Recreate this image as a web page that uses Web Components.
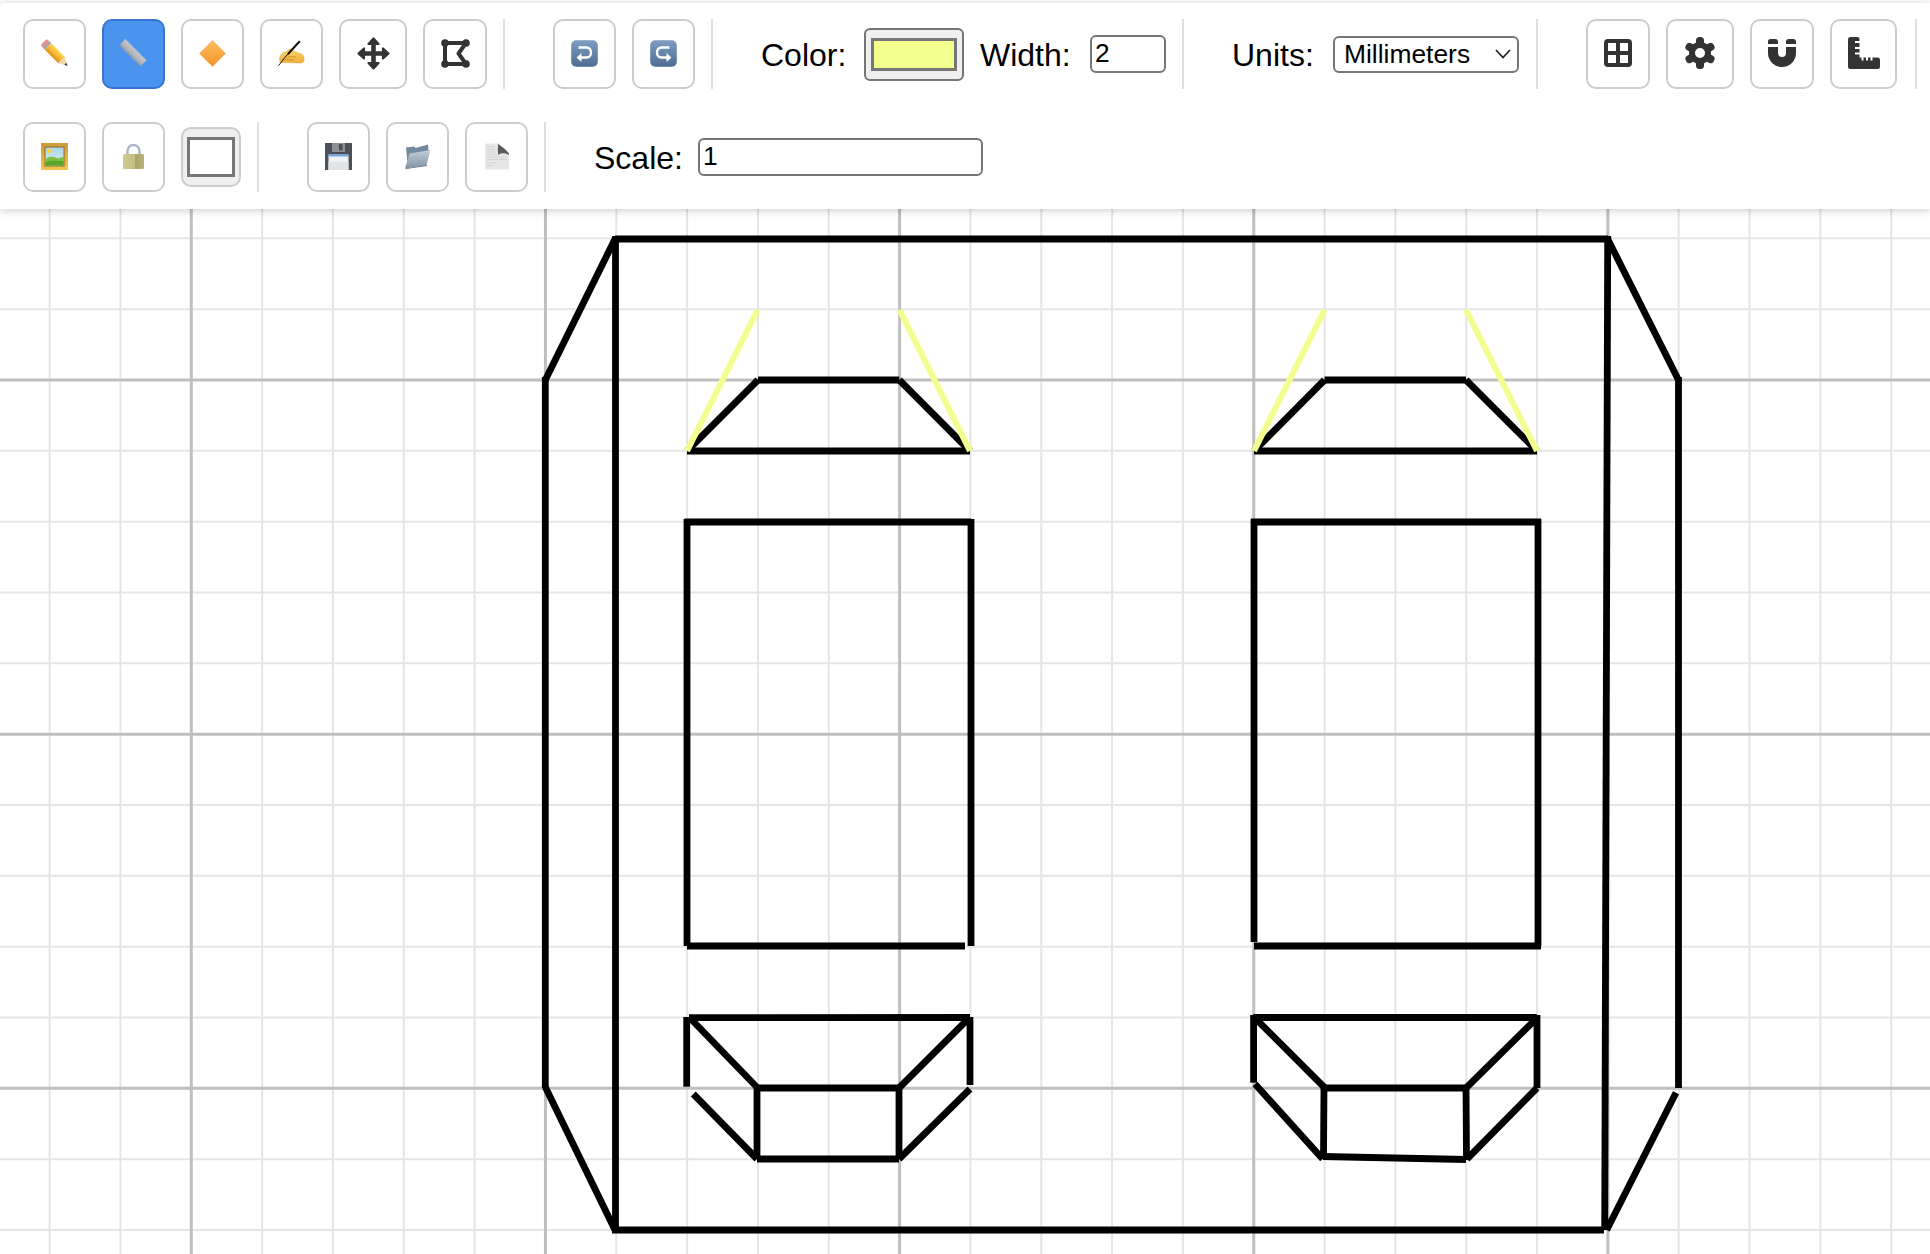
<!DOCTYPE html>
<html lang="en">
<head>
<meta charset="utf-8">
<title>Drawing tool</title>
<style>
  html, body { margin: 0; height: 100%; background: #fff; overflow: hidden; }
  body { font-family: "Liberation Sans", Arial, sans-serif; color: #000; }
</style>
</head>
<body>
<app-shell>
  <tool-bar slot="bar">
    <tool-row>
      <tool-btn><tool-icon name="pencil"></tool-icon></tool-btn>
      <tool-btn active><tool-icon name="ruler"></tool-icon></tool-btn>
      <tool-btn><tool-icon name="diamond"></tool-icon></tool-btn>
      <tool-btn><tool-icon name="hand"></tool-icon></tool-btn>
      <tool-btn w="68"><tool-icon name="move"></tool-icon></tool-btn>
      <tool-btn w="64"><tool-icon name="poly"></tool-icon></tool-btn>
      <tool-sep></tool-sep>
      <tool-btn><tool-icon name="undo"></tool-icon></tool-btn>
      <tool-btn><tool-icon name="redo"></tool-icon></tool-btn>
      <tool-sep></tool-sep>
      <field-label w="87">Color:</field-label>
      <color-field color="#f2ff8e"></color-field>
      <field-label w="94">Width:</field-label>
      <text-field w="76">2</text-field>
      <tool-sep></tool-sep>
      <field-label w="85">Units:</field-label>
      <select-field>Millimeters</select-field>
      <tool-sep style="margin-left:1px"></tool-sep>
      <tool-btn w="64"><tool-icon name="grid"></tool-icon></tool-btn>
      <tool-btn w="68"><tool-icon name="gear"></tool-icon></tool-btn>
      <tool-btn w="64"><tool-icon name="magnet"></tool-icon></tool-btn>
      <tool-btn w="67"><tool-icon name="measure"></tool-icon></tool-btn>
      <tool-sep style="margin-left:2px"></tool-sep>
    </tool-row>
    <tool-row>
      <tool-btn><tool-icon name="picture"></tool-icon></tool-btn>
      <tool-btn><tool-icon name="lock"></tool-icon></tool-btn>
      <fill-field></fill-field>
      <tool-sep></tool-sep>
      <tool-btn><tool-icon name="floppy"></tool-icon></tool-btn>
      <tool-btn><tool-icon name="folder"></tool-icon></tool-btn>
      <tool-btn><tool-icon name="page"></tool-icon></tool-btn>
      <tool-sep></tool-sep>
      <field-label w="88">Scale:</field-label>
      <text-field w="285">1</text-field>
    </tool-row>
  </tool-bar>
  <draw-canvas slot="canvas"></draw-canvas>
</app-shell>

<script>
const ICONS = {
  pencil: [27, `<svg viewBox="0 0 27 27"><defs><linearGradient id="b" x1="0" y1="0" x2="0" y2="1"><stop offset="0" stop-color="#fbd65e"/><stop offset=".55" stop-color="#f5b731"/><stop offset="1" stop-color="#dd8d1a"/></linearGradient></defs>
    <g transform="translate(3.6 3) rotate(45)"><rect x="-1.5" y="-4.6" width="5" height="9.2" rx="2.4" fill="#e88f93"/><rect x="2" y="-4.6" width="3" height="9.2" fill="#a9a9a9"/><rect x="5" y="-4.6" width="19" height="9.2" fill="url(#b)"/><path d="M24 -4.6L24 4.6L32 0Z" fill="#f1d7ab"/><path d="M29.4 -1.3L29.4 1.3L32.4 0Z" fill="#1e2630"/></g></svg>`],
  ruler: [27, `<svg viewBox="0 0 27 27"><defs><linearGradient id="r" x1="0" y1="0" x2="0" y2="1"><stop offset="0" stop-color="#c4c7cc"/><stop offset=".6" stop-color="#b1b5bb"/><stop offset="1" stop-color="#8e97a6"/></linearGradient></defs>
    <g transform="translate(3.6 3.6) rotate(45)"><rect x="-2" y="-4.4" width="30" height="8.8" fill="url(#r)"/></g></svg>`],
  diamond: [27, `<svg viewBox="0 0 27 27"><defs><linearGradient id="d" x1="0" y1="0" x2="0" y2="1"><stop offset="0" stop-color="#fbbf5c"/><stop offset="1" stop-color="#f5922a"/></linearGradient></defs>
    <path d="M13.5 .5L26.5 13.5L13.5 26.5L.5 13.5Z" fill="url(#d)" stroke="#eaa659" stroke-width=".6"/></svg>`],
  hand: [27, `<svg viewBox="0 0 27 27"><defs><linearGradient id="h" x1="0" y1="0" x2="0" y2="1"><stop offset="0" stop-color="#fcd866"/><stop offset="1" stop-color="#f0ae3a"/></linearGradient></defs>
    <path d="M1.500 19C2 15 5 12 8.500 11.500L11 9L14.500 9L16.500 11.500L22 13.500C25.500 14.500 26.500 17 26 20.500C25.500 22.500 24 23 22 23L6 22.500L2 22.500Z" fill="url(#h)" stroke="#d0963a" stroke-width=".4"/>
    <path d="M4 20C8 19 12 20 16 20M9 17.500C12 16 15 16.500 18 17" fill="none" stroke="#b87a24" stroke-width=".6"/>
    <path d="M21 .6L22.600 1.800L11 14.500L9 15.500L9.500 13Z" fill="#111"/><path d="M9 14.800L.4 25.800" stroke="#111" stroke-width=".9"/></svg>`],
  move: [33, `<svg viewBox="0 0 33 33"><g fill="#333" stroke="#333" stroke-width="2.200" stroke-linejoin="round"><path d="M16.500 1.500L21.500 7H11.500Z"/><path d="M16.500 31.500L21.500 26H11.500Z"/><path d="M1.500 16.500L7 11.500V21.500Z"/><path d="M31.500 16.500L26 11.500V21.500Z"/></g><path d="M16.500 6V27M6 16.500H27" stroke="#333" stroke-width="4.600"/></svg>`],
  poly: [29, `<svg viewBox="0 0 29 29"><path d="M4 4H25L17.500 14.500L25 25H4Z" fill="none" stroke="#333" stroke-width="4" stroke-linejoin="round"/><g fill="#333"><circle cx="4" cy="4" r="3.800"/><circle cx="25" cy="4" r="3.800"/><circle cx="4" cy="25" r="3.800"/><circle cx="25" cy="25" r="3.800"/></g></svg>`],
  undo: [27, `<svg viewBox="0 0 27 27"><defs><linearGradient id="u" x1="0" y1="0" x2="0" y2="1"><stop offset="0" stop-color="#7f9dc0"/><stop offset="1" stop-color="#4d6c90"/></linearGradient></defs><rect x=".2" y=".2" width="26.600" height="26.600" rx="5" fill="url(#u)"/>
    <path d="M7.500 7.500H15.500C21.500 7.500 21.500 17.500 15.500 17.500H9" fill="none" stroke="#fff" stroke-width="2.400"/><path d="M10.500 13L5.500 17.500L10.500 22Z" fill="#fff"/></svg>`],
  redo: [27, `<svg viewBox="0 0 27 27"><defs><linearGradient id="u" x1="0" y1="0" x2="0" y2="1"><stop offset="0" stop-color="#7f9dc0"/><stop offset="1" stop-color="#4d6c90"/></linearGradient></defs><rect x=".2" y=".2" width="26.600" height="26.600" rx="5" fill="url(#u)"/>
    <path d="M19.500 7.500H11.500C5.500 7.500 5.500 17.500 11.500 17.500H18" fill="none" stroke="#fff" stroke-width="2.400"/><path d="M16.500 13L21.500 17.500L16.500 22Z" fill="#fff"/></svg>`],
  grid: [28, `<svg viewBox="0 0 28 28"><path fill="#333" fill-rule="evenodd" d="M4 0H24A4 4 0 0 1 28 4V24A4 4 0 0 1 24 28H4A4 4 0 0 1 0 24V4A4 4 0 0 1 4 0ZM4 4V12H12V4ZM16 4V12H24V4ZM4 16V24H12V16ZM16 16V24H24V16Z"/></svg>`],
  gear: [32, `<svg viewBox="0 0 32 32"><g fill="#333"><circle cx="16" cy="16" r="11"/><rect x="12" y="0" width="8" height="9" rx="3.500"/><rect x="12" y="0" width="8" height="9" rx="3.500" transform="rotate(60 16 16)"/><rect x="12" y="0" width="8" height="9" rx="3.500" transform="rotate(120 16 16)"/><rect x="12" y="0" width="8" height="9" rx="3.500" transform="rotate(180 16 16)"/><rect x="12" y="0" width="8" height="9" rx="3.500" transform="rotate(240 16 16)"/><rect x="12" y="0" width="8" height="9" rx="3.500" transform="rotate(300 16 16)"/></g><circle cx="16" cy="16" r="5" fill="#fff"/></svg>`],
  magnet: [28, `<svg viewBox="0 0 28 28"><path d="M5 8V14A9 9 0 0 0 23 14V8" fill="none" stroke="#333" stroke-width="10"/><g fill="#333"><path d="M0 2.800A2.800 2.800 0 0 1 2.800 0H7.200A2.800 2.800 0 0 1 10 2.800V5H0Z"/><path d="M18 2.800A2.800 2.800 0 0 1 20.800 0H25.200A2.800 2.800 0 0 1 28 2.800V5H18Z"/></g></svg>`],
  measure: [32, `<svg viewBox="0 0 32 32"><path fill="#333" d="M2.500 0H9A2.500 2.500 0 0 1 11.500 2.500V4H7V6H11.500V10H7V12H11.500V15.500H7V17.500H11.500V20.500H13.500V23.500H15.500V20.500H18V23.500H20V20.500H22.500V23.500H24.500V20.500H29.500A2.500 2.500 0 0 1 32 23V29.500A2.500 2.500 0 0 1 29.500 32H2.500A2.500 2.500 0 0 1 0 29.500V2.500A2.500 2.500 0 0 1 2.500 0Z"/></svg>`],
  picture: [27, `<svg viewBox="0 0 27 27"><defs><linearGradient id="f" x1="0" y1="0" x2="0" y2="1"><stop offset="0" stop-color="#cd9a38"/><stop offset="1" stop-color="#f0c84e"/></linearGradient><linearGradient id="s" x1="0" y1="0" x2="0" y2="1"><stop offset="0" stop-color="#a9d4e9"/><stop offset="1" stop-color="#dfeef2"/></linearGradient></defs>
    <rect width="27" height="27" fill="url(#f)"/><rect x="3.500" y="3.500" width="20" height="20" fill="#8a6a2a"/><rect x="4.500" y="4.500" width="18" height="18" fill="url(#s)"/><circle cx="8" cy="8" r="2.300" fill="#f4d63c"/><path d="M4.500 16C9 12.500 13 14 17 15.500C19 14.500 21 14 22.500 14.500V22.500H4.500Z" fill="#7cc03f"/><path d="M4.500 19C10 17 16 18 22.500 18V22.500H4.500Z" fill="#57a52c"/></svg>`],
  lock: [27, `<svg viewBox="0 0 27 27"><defs><linearGradient id="l" x1="0" y1="0" x2="1" y2="0"><stop offset="0" stop-color="#cfcb93"/><stop offset=".55" stop-color="#c4bf83"/><stop offset=".6" stop-color="#a8a368"/><stop offset="1" stop-color="#bab57c"/></linearGradient></defs>
    <path d="M7.500 12.500V8A6 6 0 0 1 19.500 8V12.500" fill="none" stroke="#a9b5c8" stroke-width="2.400"/><rect x="3" y="11" width="21" height="15" rx="1.200" fill="url(#l)"/></svg>`],
  floppy: [27, `<svg viewBox="0 0 27 27"><path d="M.5 0H26.500A.5 .5 0 0 1 27 .5V26.500A.5 .5 0 0 1 26.500 27H.5A.5 .5 0 0 1 0 26.500V.5A.5 .5 0 0 1 .5 0Z" fill="#4b4f57"/><rect x="7" y="0" width="13" height="9" fill="#8d8f94"/><rect x="14" y="1" width="3.500" height="6.500" fill="#4b4f57"/><rect x="3.500" y="11.500" width="20" height="15.500" fill="#f1f2f4"/><rect x="3.500" y="11.500" width="20" height="2" fill="#6fa7e6"/><rect x="3.500" y="19" width="20" height="8" fill="#e2e3e6"/></svg>`],
  folder: [27, `<svg viewBox="0 0 27 27"><defs><linearGradient id="o" x1="0" y1="0" x2="0" y2="1"><stop offset="0" stop-color="#c3ced9"/><stop offset="1" stop-color="#7f93a5"/></linearGradient></defs>
    <path d="M2 4.500L10 3.500L11.500 5L24 1.500L25 12L4 25Z" fill="#7488a0"/><path d="M5.500 10.500L26.500 7L22.500 22L1 25.500Z" fill="url(#o)"/><path d="M1 25.500L22.500 22L23 23L2 26Z" fill="#5f7081"/></svg>`],
  page: [27, `<svg viewBox="0 0 27 27"><path d="M2 .5H15C17 4 20 9 26 10V26.500H2Z" fill="#e7e7e7"/><path d="M15 .5C16.500 2 24 7 26 10.500L26 12C22 9.500 17 10 15.500 12C14 8 15.500 3 15 .5Z" fill="#5b5b5b"/><g stroke="#cfcfcf" stroke-width=".8"><path d="M4 4H12M4 6.500H12M4 9H12M4 11.500H14M4 14H24M4 16.500H24M4 20H14M4 22.500H10"/></g></svg>`]
};

function def(name, html, setup) {
  customElements.define(name, class extends HTMLElement {
    connectedCallback() {
      if (this.shadowRoot) return;
      const root = this.attachShadow({ mode: 'open' });
      root.innerHTML = typeof html === 'function' ? html(this) : html;
      if (setup) setup(this, root);
    }
  });
}

def('app-shell', `<style>
  :host { display: flex; flex-direction: column; height: 100vh; padding-top: 3px; box-sizing: border-box; }
  ::slotted([slot=bar]) { flex: none; position: relative; z-index: 1; }
  ::slotted([slot=canvas]) { flex: 1; min-height: 0; }
</style><slot name="bar"></slot><slot name="canvas"></slot>`);

def('tool-bar', `<style>
  :host { display: flex; flex-direction: column; gap: 33px; padding: 16px 0 17px 23px; background: #fff;
          box-shadow: 0 1px 9px rgba(0,0,0,.22); border-top-left-radius: 4px; }
</style><slot></slot>`);

def('tool-row', `<style>
  :host { display: flex; align-items: center; height: 70px; gap: 16px; }
</style><slot></slot>`);

def('tool-sep', `<style>
  :host { display: block; width: 2px; height: 70px; background: #e0e0e0; margin-right: 32px; flex: none; }
</style>`);

def('tool-btn', el => `<style>
  :host { display: flex; align-items: center; justify-content: center; box-sizing: border-box; flex: none;
          width: ${el.getAttribute('w') || 63}px; height: 70px; padding-bottom: 2px;
          background: #fff; border: 2px solid #cdcdcd; border-radius: 10px; }
  :host([active]) { background: #4a94ee; border-color: #3a74d2; }
</style><slot></slot>`);

def('tool-icon', el => {
  const [w, svg] = ICONS[el.getAttribute('name')];
  return `<style>:host { display: block; width: ${w}px; height: ${w}px; line-height: 0; } svg { width: 100%; height: 100%; display: block; overflow: visible; }</style>${svg}`;
});

def('field-label', el => `<style>
  :host { display: block; flex: none; width: ${el.getAttribute('w')}px; padding-top: 2px;
          font: 32px/36px "Liberation Sans", Arial, sans-serif; color: #000; white-space: nowrap; }
</style><slot></slot>`);

def('text-field', el => `<style>
  :host { display: block; box-sizing: border-box; flex: none; width: ${el.getAttribute('w')}px; height: 38px;
          border: 2px solid #767676; border-radius: 6px; background: #fff; padding-left: 3px;
          font: 26.3px/32px "Liberation Sans", Arial, sans-serif; color: #000; }
</style><slot></slot>`);

def('color-field', el => `<style>
  :host { display: flex; box-sizing: border-box; flex: none; width: 100px; height: 53px; padding: 8px 5px;
          background: #efefef; border: 2px solid #767676; border-radius: 6px; }
  i { display: block; flex: 1; background: ${el.getAttribute('color')}; border: 3px solid #777; }
</style><i></i>`);

def('fill-field', `<style>
  :host { display: flex; box-sizing: border-box; flex: none; width: 60px; height: 60px; padding: 8px 4px;
          background: #efefef; border: 2px solid #cdcdcd; border-radius: 10px; }
  i { display: block; flex: 1; background: #fff; border: 3px solid #777; }
</style><i></i>`);

def('select-field', `<style>
  :host { display: flex; align-items: center; justify-content: space-between; box-sizing: border-box; flex: none;
          width: 186px; height: 37px; border: 2px solid #767676; border-radius: 6px; background: #fff;
          padding: 0 6px 0 9px; font: 26.4px/32px "Liberation Sans", Arial, sans-serif; color: #000; }
  svg { width: 16px; height: 10px; flex: none; }
</style><span><slot></slot></span><svg viewBox="0 0 16 10"><path d="M1 1L8 8.500L15 1" fill="none" stroke="#222" stroke-width="1.800"/></svg>`);

const U = 70.83, OX = 191.3, OY = 380;
const gx = k => OX + U * k, gy = k => OY + U * k;

const BLACK = [
  // outer frame
  [615, 239, 1608, 239], [615.500, 236, 615.500, 1233], [1607.700, 236, 1604.700, 1230], [612, 1230, 1604, 1230],
  // left chamfer
  [615, 239, 545.300, 380], [545.300, 377, 545.300, 1088], [545.300, 1087, 615, 1230],
  // right chamfer
  [1607.700, 239, 1678.500, 380], [1678.500, 377, 1678.500, 1088], [1676, 1092.700, 1606.700, 1230],
  // left top trapezoid
  [687, 451, 758, 380], [758, 380, 899.300, 380], [899.300, 380, 970, 451], [687, 451, 970, 451],
  // right top trapezoid
  [1254, 451, 1324.500, 380], [1324.500, 380, 1466, 380], [1466, 380, 1537, 451], [1254, 451, 1537, 451],
  // left rect
  [687, 519, 687, 946], [684.500, 522, 971, 522], [687, 946, 965, 946], [971, 519, 971, 946],
  // right rect
  [1254, 519, 1254, 942], [1251, 522, 1541, 522], [1254, 946, 1541, 946], [1538, 519, 1538, 946],
  // left lower
  [689, 1017.700, 970, 1017.500], [686.700, 1017, 686.700, 1086.700], [970, 1017, 970, 1085],
  [689, 1017, 757.700, 1088], [970, 1017, 899, 1088], [757.700, 1088, 899, 1088],
  [757, 1086, 757, 1159], [899, 1086, 899, 1159], [757, 1159, 899, 1159],
  [693.300, 1094, 757, 1159], [970, 1089, 899, 1159],
  // right lower
  [1253.300, 1017.500, 1536.700, 1017.500], [1253.600, 1015, 1253.600, 1082.700], [1537, 1015, 1537, 1088],
  [1255, 1018, 1325, 1088], [1537, 1018, 1466, 1088], [1325, 1088, 1466, 1088],
  [1324, 1086, 1323.500, 1158], [1466, 1086, 1466.500, 1160], [1323, 1156.500, 1466, 1159.500],
  [1255, 1084, 1322.700, 1159], [1537, 1088, 1467, 1159]
];
const YELLOW = [
  [687, 451, 757.500, 310], [899.500, 310, 970, 451],
  [1254, 451, 1324.500, 310], [1466, 310, 1537, 451]
];

def('draw-canvas', `<style>
  :host { display: block; overflow: hidden; background: #fff; }
  svg { display: block; width: 1930px; height: 1045px; }
</style><svg viewBox="0 209 1930 1045" xmlns="http://www.w3.org/2000/svg"></svg>`, (el, root) => {
  const line = (a, b, c, d, col, w) => `<line x1="${a}" y1="${b}" x2="${c}" y2="${d}" stroke="${col}" stroke-width="${w}"/>`;
  let minor = '', major = '', ink = '';
  for (let k = -2; gx(k) < 1930; k++) {
    if (((k % 5) + 5) % 5 === 0) major += line(gx(k), 209, gx(k), 1254, '#bfbfbf', 3);
    else minor += line(gx(k), 209, gx(k), 1254, '#e5e5e5', 2);
  }
  for (let k = -2; gy(k) < 1254; k++) {
    if (((k % 5) + 5) % 5 === 0) major += line(0, gy(k), 1930, gy(k), '#bfbfbf', 3);
    else minor += line(0, gy(k), 1930, gy(k), '#e5e5e5', 2);
  }
  BLACK.forEach(p => ink += line(p[0], p[1], p[2], p[3], '#000', 6.8));
  YELLOW.forEach(p => ink += line(p[0], p[1], p[2], p[3], '#f2ff8e', 6));
  root.querySelector('svg').innerHTML = minor + major + ink;
});
</script>
</body>
</html>
